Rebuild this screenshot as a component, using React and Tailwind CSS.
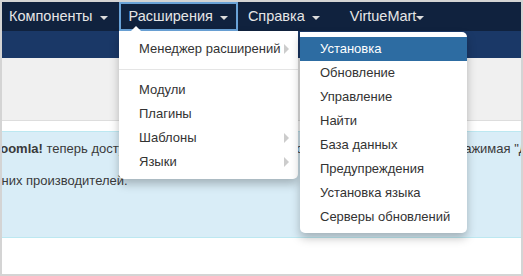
import React from 'react'

function Caret() {
  return <span className="inline-block w-0 h-0 border-x-[4px] border-x-transparent border-t-[4px] border-t-[#dddddd] ml-[7px] mt-[2px]" />
}

function SubArrow() {
  return <span className="absolute right-[9px] top-1/2 -translate-y-1/2 w-0 h-0 border-y-[5px] border-y-transparent border-l-[5px] border-l-[#cccccc]" />
}

function NavItem({ label, active }) {
  return (
    <div
      className={`flex items-center h-full ${active ? 'border-2 border-[#6aa3d8] px-[8px]' : 'px-[10px]'}`}
    >
      <span>{label}</span>
      <Caret />
    </div>
  )
}

const installItems = [
  'Обновление',
  'Управление',
  'Найти',
  'База данных',
  'Предупреждения',
  'Установка языка',
  'Серверы обновлений',
]

export default function App() {
  return (
    <div
      className="relative w-[523px] h-[276px] overflow-hidden border-2 border-[#d4d4d4] bg-white text-[13px] text-[#333333]"
      style={{ fontFamily: '"Liberation Sans", Arial, sans-serif' }}
    >
      {/* navbar */}
      <div className="flex h-[29px] bg-[#10223e] text-[14.5px] text-[#e6e6e6]">
        <div className="flex items-center h-full pl-[7px] pr-[11px]">
          <span>Компоненты</span>
          <Caret />
        </div>
        <NavItem label="Расширения" active />
        <NavItem label="Справка" />
        <div className="flex items-center h-full pl-[20px]">
          <span>VirtueMart</span>
          <span className="inline-block w-0 h-0 border-x-[4px] border-x-transparent border-t-[4px] border-t-[#dddddd] mt-[2px]" />
        </div>
      </div>

      {/* header band */}
      <div className="h-[27px] bg-[#1a3867]" />

      {/* subhead */}
      <div className="h-[63px] bg-[#f0f0f0] border-b border-[#dddddd]" />

      <div className="h-[10px]" />

      {/* alert */}
      <div className="h-[107px] bg-[#d9edf7] border-y border-[#bce8f1] overflow-hidden text-[#3a3a3a]">
        <p className="whitespace-nowrap mt-[7px] ml-[-9px] flex">
          <span className="w-[464px] shrink-0 overflow-hidden">
            <b>Joomla!</b> теперь доступны сообщения после установки, которые
          </span>
          <span>нажимая "Деактивировать"</span>
        </p>
        <p className="whitespace-nowrap mt-[12px] ml-[-17px]">
          от них производителей.
        </p>
      </div>

      {/* Extensions dropdown */}
      <div className="absolute left-[117px] top-[29px] w-[179px] bg-white rounded-b-[5px] shadow-[0_5px_10px_rgba(0,0,0,0.25)] pt-[6px] pb-[5px]">
        <span className="absolute -top-[5px] left-[12px] w-0 h-0 border-x-[5px] border-x-transparent border-b-[5px] border-b-white" />
        <div className="relative h-[24px] flex items-center pl-[20px]">
          Менеджер расширений
          <SubArrow />
        </div>
        <div className="h-px bg-[#e5e5e5] my-[8px]" />
        <div className="h-[24px] flex items-center pl-[20px]">Модули</div>
        <div className="h-[24px] flex items-center pl-[20px]">Плагины</div>
        <div className="relative h-[24px] flex items-center pl-[20px]">
          Шаблоны
          <SubArrow />
        </div>
        <div className="relative h-[24px] flex items-center pl-[20px]">
          Языки
          <SubArrow />
        </div>
      </div>

      {/* Extension manager submenu */}
      <div className="absolute left-[298px] top-[30px] w-[167px] bg-white rounded-[5px] rounded-tl-none shadow-[0_5px_10px_rgba(0,0,0,0.25)] pt-[5px] pb-[4px]">
        <div className="h-[24px] flex items-center pl-[20px] bg-[#2d6ca2] text-white">Установка</div>
        {installItems.map((item) => (
          <div key={item} className="h-[24px] flex items-center pl-[20px]">
            {item}
          </div>
        ))}
      </div>
    </div>
  )
}
